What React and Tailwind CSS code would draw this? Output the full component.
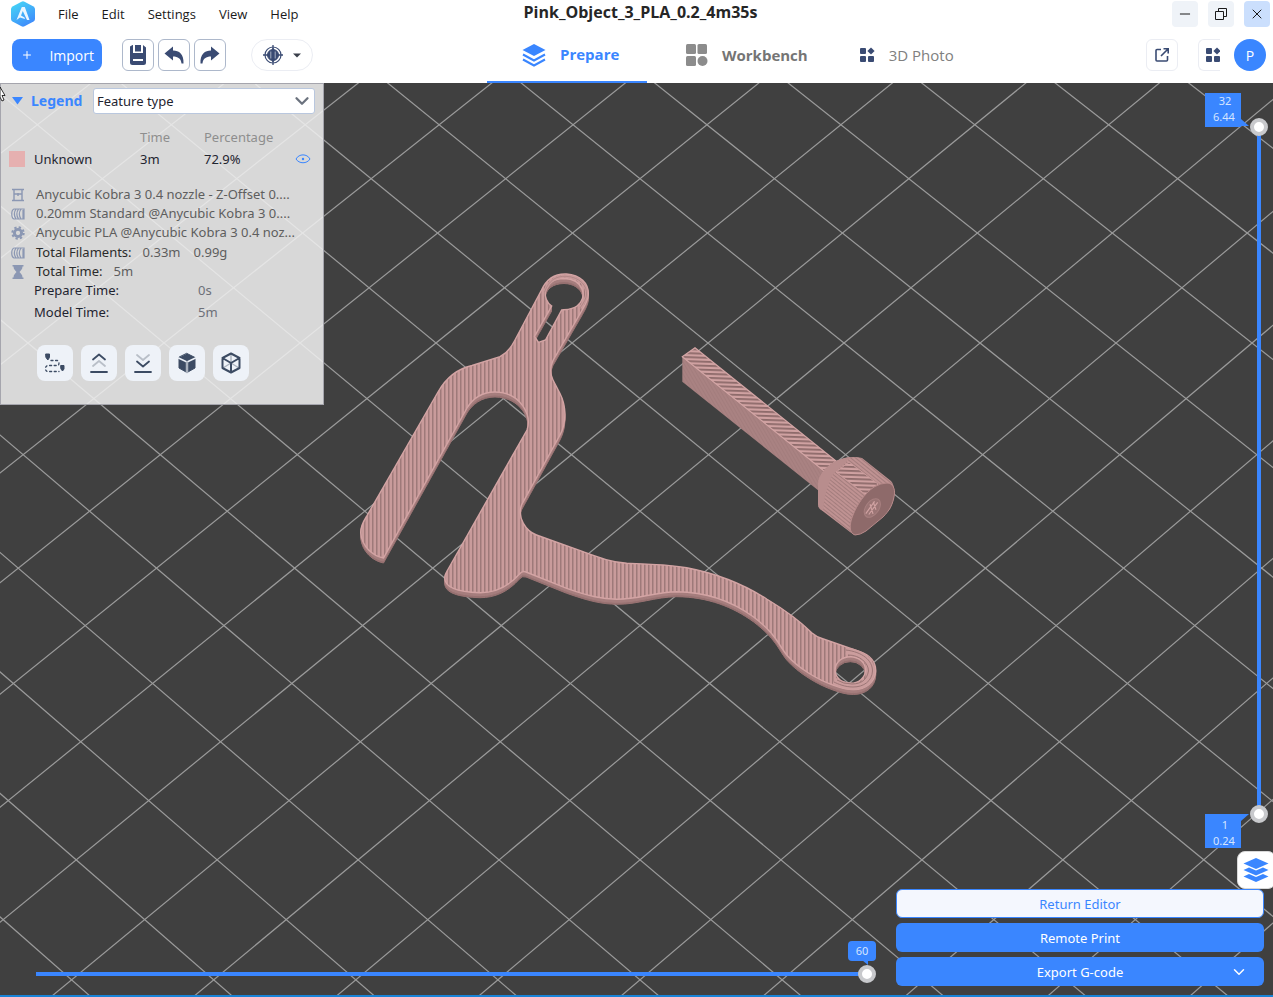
import React, { useState } from 'react';
import { ChevronDown, Minus, Plus, X } from 'lucide-react';

const menuItems = ['File', 'Edit', 'Settings', 'View', 'Help'];

const profileRows = [
  { icon: 'printer', text: 'Anycubic Kobra 3 0.4 nozzle - Z-Offset 0....' },
  { icon: 'filament', text: '0.20mm Standard @Anycubic Kobra 3 0....' },
  { icon: 'gear', text: 'Anycubic PLA @Anycubic Kobra 3 0.4 noz...' },
];

// Perspective projection of the build plate lattice
const project = (row, col) => {
  const size = 1 / (0.0072956 - 0.0000287 * row);
  return { x: 640 + (size * col) / 2, y: 454.8 + (size - 137.07) / 0.00958 };
};

const gridLines = [];
for (let c = -31; c <= 31; c += 2) {
  gridLines.push([project(-8, -8 + c), project(12, 12 + c)]);
  gridLines.push([project(-8, 8 + c), project(12, -12 + c)]);
}

const clipPath =
  'M383.5 558C373 556 362 547 360.7 533C360.5 527 363 522 366.5 516.5L438 392C446 378 456 369 472 365.5L500 356.7C507 353 512 346 515 340L541.5 290C547 278 556 273.5 566.5 274C580 275 589 283 588.3 295C588 300 585 305 582.5 309.5L553 360.5C550 367 550 374 553 380L560 393.5C566.5 406 566.5 423 560 435L521.5 505C517 518 526 531 536.5 535L583 551.7C600 558 610 562 626.7 563.3C645 564 665 564 686.7 567.7C714 573 742 583 766.7 599C790 613 802 623 812 633Q816 636.500 822 638.500L860 651.700C870 655 876 662 875.700 671C875 682 866 689.500 853.300 689.500C846 689.500 840 687.500 833 685C818 680 798 668 786.700 655C778 644 776 634 753.300 616.700C733 602 708 592 676.700 591.700C655 592 638 599.500 616.700 599.300C602 599 590 596.500 566.700 588.300L526 572Q522.500 570.500 519.500 574C508 587 495 592.700 480 592.700C458 592 444.700 588 444.700 578Q444.700 575 446.500 572L527 430C532 415 521 392.500 495 392C481 392 472 400 467 408Z' +
  'M551.7 306C542 300 541 279 564 278.500C584 279 588 298 577 306C573 309.500 567 309.500 561.700 310L545.500 340L538.500 342.500L534.500 336.500Z' +
  'M865.500 670A15.200 13.300 0 1 0 835.100 670A15.200 13.300 0 1 0 865.500 670Z';

const Scene = () => (
  <svg
    className="absolute inset-0 h-full w-full"
    viewBox="0 83 1273 912"
    preserveAspectRatio="xMidYMid slice"
    aria-hidden="true"
  >
    <defs>
      <pattern id="infill" width="4" height="8" patternUnits="userSpaceOnUse">
        <rect width="4" height="8" fill="#c99b9b" />
        <rect width="1.5" height="8" fill="#9e7979" />
      </pattern>
      <pattern id="barInfill" width="8" height="4" patternUnits="userSpaceOnUse" patternTransform="rotate(2)">
        <rect width="8" height="4" fill="#cfa1a1" />
        <rect width="8" height="1.800" fill="#8d6a6a" />
      </pattern>
      <pattern id="headLines" width="8" height="3" patternUnits="userSpaceOnUse" patternTransform="rotate(39)">
        <rect width="8" height="3" fill="#bf9292" />
        <rect width="8" height="1" fill="#a37d7d" />
      </pattern>
      <pattern id="wall" width="3" height="3" patternUnits="userSpaceOnUse" patternTransform="rotate(60)">
        <rect width="3" height="3" fill="#a98282" />
        <rect width="3" height="1" fill="#a37d7d" />
      </pattern>
      <path id="clip" d={clipPath} fillRule="evenodd" />
    </defs>

    <g stroke="#9b9b9b" strokeWidth="1.2">
      {gridLines.map(([a, b], i) => (
        <line key={i} x1={a.x} y1={a.y} x2={b.x} y2={b.y} />
      ))}
    </g>

    {/* Flat clip */}
    <g fill="#987272" stroke="#987272" strokeWidth="1">
      <use href="#clip" y="5" />
      <use href="#clip" y="4" />
    </g>
    <g fill="#a67e7e" stroke="#a67e7e" strokeWidth="1">
      <use href="#clip" y="3" />
      <use href="#clip" y="2" />
      <use href="#clip" y="1" />
    </g>
    <use href="#clip" fill="url(#infill)" stroke="#d3a4a4" strokeWidth="1.4" />
    <g fill="none">
      <path d="M544.500 292C549 280 556 276 566 276.300C580 277 587.500 286 586.500 295Q586 300 580 308" stroke="#c99b9b" strokeWidth="3" />
      <path d="M544.500 292C549 280 556 276 566 276.300C580 277 587.500 286 586.500 295Q586 300 580 308" stroke="#a98181" strokeWidth=".8" />
      <path d="M846 651C862 653 871 660 871 671C871 681 864 686.500 853 686.500C845 686.500 838 683 834 681" stroke="#cb9d9d" strokeWidth="7" />
      <path d="M846 650C862 652 872.500 660 872.500 671C872 681 864 687 853 687C845 687 838 684 834 682" stroke="#9c7676" strokeWidth="1" />
      <path d="M848 655C860 655 868.500 663 868.500 671C867 680 861 684 852 684Q843 684 837 680" stroke="#9c7676" strokeWidth="1" />
    </g>

    {/* Pin */}
    <path d="M682.300 356.700L825 470L824 495L682.300 381.700Z" fill="url(#wall)" />
    <path d="M682.300 356.700L695 347.700L836 461L824 471Z" fill="url(#barInfill)" stroke="#d3a5a5" strokeWidth="1.200" />
    <path
      d="M818 485C818 476 825 467 835 461.500C843 458 854 455.500 862 458L891 481C896 486 895 500 890 509L857 535Q853 535 850 532L820 509Q818 507 818 504Z"
      fill="url(#headLines)"
    />
    <path d="M818 485C818 476 825 467 835 461.500C840 459 847 457 851 457L835 472Q826 482 823 511L820 509Q818 507 818 504Z" fill="#b88d8d" />
    <path d="M836 472L849 462L878 484L866 495Z" fill="url(#barInfill)" stroke="#c99b9b" />
    <path
      d="M887 483C893 483 895 489 894.500 494C893 505 889 511 883 517L866 531Q860 535 855 535C849 533 849 525 853 515C857 505 864 494 874 487Q881 483 887 483Z"
      fill="#8e6a6a"
      stroke="#b68a8a"
      strokeWidth="1"
    />
    <g transform="rotate(-54 872.300 508)">
      <ellipse cx="872.300" cy="508" rx="10.500" ry="6.500" fill="#9b7575" stroke="#a88080" />
      <path d="M864 506h15M865 509h15M868 512l6-8M873 512l5-7" stroke="#d0a2a2" strokeWidth="1.200" />
    </g>
  </svg>
);

const Logo = () => (
  <svg width="24" height="26" viewBox="0 0 24 26" aria-hidden="true">
    <defs>
      <linearGradient id="logo" x1="0" y1="0" x2="0.600" y2="1">
        <stop offset="0" stopColor="#45dcf5" />
        <stop offset="1" stopColor="#3f8dfb" />
      </linearGradient>
    </defs>
    <path d="M10.500 .7Q12 0 13.500 .7L22.500 5.500Q24 6.500 24 8V18Q24 19.500 22.500 20.500L13.500 25.300Q12 26 10.500 25.300L1.500 20.500Q0 19.500 0 18V8Q0 6.500 1.500 5.500Z" fill="url(#logo)" />
    <path d="M10.800 6H13.800L18.500 19H16L11.800 10L10 14.500L13.500 16.500L14 18L9 16.500L5.500 19Z" fill="#e9f6ff" />
  </svg>
);

const LayersGlyph = ({ className }) => (
  <svg viewBox="0 0 24 24" className={className} aria-hidden="true">
    <path d="M12 1L23.500 7L12 13L.5 7Z" fill="currentColor" />
    <path d="M1 11.500L12 17.500L23 11.500M1 16.500L12 22.500L23 16.500" fill="none" stroke="currentColor" strokeWidth="2" />
  </svg>
);

const WorkbenchGlyph = () => (
  <svg width="22" height="22" viewBox="0 0 22 22" fill="#8c8c8c" aria-hidden="true">
    <rect x="0" y="0" width="10" height="10" rx="1.500" />
    <rect x="11.500" y="0" width="9.500" height="10" rx="1.500" />
    <rect x="0" y="12" width="10" height="10" rx="1.500" />
    <circle cx="16.500" cy="17" r="5" />
  </svg>
);

const AppsGlyph = () => (
  <svg width="16" height="16" viewBox="0 0 16 16" fill="#3a4b73" className="shrink-0" aria-hidden="true">
    <rect x="1" y="1" width="6" height="6" rx="1" />
    <rect x="1" y="9" width="6" height="6" rx="1" />
    <rect x="9" y="9" width="6" height="6" rx="1" />
    <path d="M12 .4L15.600 4L12 7.600L8.400 4Z" />
  </svg>
);

const SaveGlyph = () => (
  <svg width="18" height="22" viewBox="0 0 18 22" aria-hidden="true">
    <path d="M1 2.500L3.500 1H4V9H14V1L17 3.500V18.500Q17 21 14.500 21H3.500Q1 21 1 18.500Z" fill="#3a4b73" />
    <rect x="6" y="1" width="6" height="6.500" fill="#3a4b73" />
    <rect x="4" y="15" width="10" height="2" fill="#fff" />
  </svg>
);

const UndoGlyph = ({ className }) => (
  <svg width="20" height="18" viewBox="0 0 20 18" className={className} aria-hidden="true">
    <path d="M.5 7.500L9 .5V4.500C15 4.500 20 8 19.500 17.500H17.500C17 12.500 14 10.500 9 10.500V14.500Z" fill="#3a4b73" />
  </svg>
);

const TargetGlyph = () => (
  <svg width="20" height="20" viewBox="0 0 20 20" fill="none" stroke="#3a4b73" aria-hidden="true">
    <circle cx="10" cy="10" r="8" strokeWidth="1.200" />
    <circle cx="10" cy="10" r="5.500" fill="#3a4b73" />
    <path d="M10 0V20M0 10H20" strokeWidth="1.300" />
    <path d="M7.800 6.500V13.500M12.200 6.500V13.500" stroke="#c3cad8" strokeWidth=".8" />
    <path d="M10 3V17" strokeWidth="1.500" />
  </svg>
);

const PopoutGlyph = () => (
  <svg width="16" height="16" viewBox="0 0 16 16" fill="none" stroke="#3a4b73" strokeWidth="1.600" aria-hidden="true">
    <path d="M7 2.500H3Q2 2.500 2 3.500V13Q2 14 3 14H12.500Q13.500 14 13.500 13V9M7 9L13.500 2.500M9.500 1.800H14.200V6.500" />
  </svg>
);

const RestoreGlyph = () => (
  <svg width="14" height="14" viewBox="0 0 14 14" fill="none" stroke="#1a1a1a" aria-hidden="true">
    <path d="M1.500 4.500H9.500V12.500H1.500ZM4.500 4V1.500H12.500V9.500H10" />
  </svg>
);

const RowGlyph = ({ name }) => (
  <svg width="14" height="14" viewBox="0 0 14 14" className="shrink-0" aria-hidden="true">
    {name === 'printer' && (
      <path d="M1 1.500H13M3 2V12M11 2V12M1 12.500H13M3 6H11M7 5V8" fill="none" stroke="#8b97b3" strokeWidth="1.400" />
    )}
    {name === 'filament' && (
      <path d="M3 2C0 3 0 11 3 12M5 2C3 5 3 9 5 12M7.500 2C5.500 5 5.500 9 7.500 12M10 2C8 5 8 9 10 12M2.500 2H13V12H2.500M12 3V12" fill="none" stroke="#8b97b3" strokeWidth="1.200" />
    )}
    {name === 'gear' && (
      <g fill="none" stroke="#8b97b3">
        <circle cx="7" cy="7" r="3.600" strokeWidth="2.900" />
        <circle cx="7" cy="7" r="5.700" strokeWidth="2" strokeDasharray="2.300 2.177" />
      </g>
    )}
    {name === 'hourglass' && (
      <path d="M1.500 0H12.500V1.500H11.500C11.500 4.500 9.500 5.500 8.500 7C9.500 8.500 11.500 9.500 11.500 12.500H12.500V14H1.500V12.500H2.500C2.500 9.500 4.500 8.500 5.500 7C4.500 5.500 2.500 4.500 2.500 1.500H1.500Z" fill="#8b97b3" />
    )}
  </svg>
);

const EyeGlyph = () => (
  <svg width="16" height="12" viewBox="0 0 16 12" fill="none" stroke="#3a86ff" aria-hidden="true">
    <path d="M1 6C4 .5 12 .5 15 6C12 11 4 11 1 6Z" />
    <circle cx="8" cy="6" r="1.200" fill="#3a86ff" stroke="none" />
  </svg>
);

const ToolGlyph = ({ name }) => (
  <svg width="22" height="22" viewBox="0 0 22 22" fill="none" stroke="#3c4b63" strokeWidth="1.800" strokeLinecap="round" strokeLinejoin="round" aria-hidden="true">
    {name === 'Travel moves' && (
      <>
        <path d="M2 2H5.500V5.500L3.800 8L2 5.500ZM17 13.500H20V17L18.500 19L17 17Z" fill="#3c4b63" strokeWidth="1" />
        <path d="M7 8.500H13.500Q15 9.500 15 11Q15 13.500 13 13.500H4Q1.500 14 1.500 16.500Q1.500 19.500 4 19.500H15" strokeDasharray="2 2.600" strokeWidth="1.300" />
      </>
    )}
    {name === 'Layer up' && (
      <>
        <path d="M5 14L11 9L17 14" stroke="#b9bfc8" />
        <path d="M5 7.500L11 2.500L17 7.500M3 20H19" />
      </>
    )}
    {name === 'Layer down' && (
      <>
        <path d="M5 3L11 8L17 3" stroke="#b9bfc8" />
        <path d="M5 9.500L11 14.500L17 9.500M3 20H19" />
      </>
    )}
    {name === 'Solid view' && (
      <>
        <path d="M11 1.500L19 5.500V16L11 20.500L3 16V5.500Z" fill="#3c4b63" strokeWidth="1" />
        <path d="M2.500 6L11 10L19.500 6" stroke="#eef2f8" strokeWidth="1.400" />
        <path d="M11 10.500V20" stroke="#a9b1bd" strokeWidth="2.500" />
      </>
    )}
    {name === 'Wire view' && (
      <>
        <path d="M11 2V10M3 16L11 11L19 16" stroke="#a9b1bd" strokeWidth="1.400" />
        <path d="M11 1.500L19.500 6V16L11 20.500L2.500 16V6ZM2.500 6L11 11L19.500 6M11 11V20" strokeWidth="2" />
      </>
    )}
  </svg>
);

const toolNames = ['Travel moves', 'Layer up', 'Layer down', 'Solid view', 'Wire view'];

const TitleBar = () => (
  <div className="grid h-7 grid-cols-[1fr_auto_1fr] items-center">
    <div className="flex items-center pl-[11px]">
      <Logo />
      <nav className="ml-3 flex gap-px text-[13px]">
        {menuItems.map((item) => (
          <button key={item} className="px-[11px] leading-5">{item}</button>
        ))}
      </nav>
    </div>
    <h1 className="pl-2 pb-1 text-[16px] leading-5 font-bold text-[#262626]">Pink_Object_3_PLA_0.2_4m35s</h1>
    <div className="flex justify-end gap-[10px] pr-[3px]">
      <button aria-label="Minimize" className="flex h-[26px] w-[26px] items-center justify-center rounded bg-[#eff3f8]">
        <Minus size={16} strokeWidth={1.5} />
      </button>
      <button aria-label="Restore" className="flex h-[26px] w-[26px] items-center justify-center rounded bg-[#eff3f8]">
        <RestoreGlyph />
      </button>
      <button aria-label="Close" className="flex h-[26px] w-[26px] items-center justify-center rounded bg-[#cbdffd]">
        <X size={16} strokeWidth={1.5} />
      </button>
    </div>
  </div>
);

const Toolbar = () => (
  <div className="flex h-[55px] items-stretch">
    <div className="flex w-[487px] shrink-0 items-center pb-px pl-3">
      <button className="flex h-8 w-[90px] items-center justify-between rounded-lg bg-[#3a86ff] pr-2 pl-[9px] text-[14px] text-white">
        <Plus size={12} strokeWidth={2} />
        Import
      </button>
      <div className="ml-5 flex gap-1">
        <button aria-label="Save" className="flex h-8 w-8 items-center justify-center rounded-md border border-[#adb8cb]">
          <SaveGlyph />
        </button>
        <button aria-label="Undo" className="flex h-8 w-8 items-center justify-center rounded-md border border-[#adb8cb]">
          <UndoGlyph />
        </button>
        <button aria-label="Redo" className="flex h-8 w-8 items-center justify-center rounded-md border border-[#adb8cb]">
          <UndoGlyph className="-scale-x-100" />
        </button>
      </div>
      <button aria-label="Calibration" className="ml-[25px] flex h-8 w-[62px] items-center justify-between rounded-full border border-[#ebedf3] px-[11px]">
        <TargetGlyph />
        <svg width="8" height="5" viewBox="0 0 8 5" fill="#3a3f4a" aria-hidden="true">
          <path d="M0 .5H8L4 4.500Z" />
        </svg>
      </button>
    </div>

    <div className="flex flex-1 items-stretch text-[15px]">
      <button className="flex w-40 items-center gap-[14px] border-b-2 border-[#3a86ff] pl-[35px] font-bold text-[#3a86ff]">
        <LayersGlyph className="h-6 w-6" />
        Prepare
      </button>
      <button className="flex items-center gap-[14px] pb-px pl-[39px] font-bold text-[#757575]">
        <WorkbenchGlyph />
        Workbench
      </button>
      <button className="flex items-center gap-[14px] pb-px pl-[51px] text-[#808080]">
        <AppsGlyph />
        3D Photo
      </button>
    </div>

    <div className="flex items-center pr-[7px] pb-px">
      <button aria-label="Open in browser" className="flex h-8 w-8 items-center justify-center rounded-md border border-[#ebedf3]">
        <PopoutGlyph />
      </button>
      <button aria-label="Apps" className="ml-5 flex h-8 w-[22px] items-center overflow-hidden rounded-l-md border border-r-0 border-[#ebedf3] pl-[6px]">
        <AppsGlyph />
      </button>
      <button aria-label="Account" className="ml-[14px] h-8 w-8 rounded-full bg-[#3a86ff] text-[14px] text-white">P</button>
    </div>
  </div>
);

const LegendPanel = () => (
  <section className="absolute top-0 left-0 w-[324px] border border-[#a5a5ad] bg-[#f1f1f1]/86 pt-1 pb-[23px] text-[13px] leading-5 text-[#1f2430]">
    <div className="flex items-center pl-[11px]">
      <svg width="12" height="8" viewBox="0 0 12 8" aria-hidden="true">
        <path d="M0 0H11L5.500 7.500Z" fill="#3a86ff" />
      </svg>
      <label htmlFor="view-type" className="ml-[7px] w-[62px] text-[14px] font-bold text-[#3a86ff]">Legend</label>
      <div className="relative">
        <select
          id="view-type"
          className="h-[26px] w-[222px] appearance-none rounded-[3px] border border-[#b9c7de] bg-white pl-[3px] text-[13px]"
        >
          <option>Feature type</option>
        </select>
        <ChevronDown size={22} strokeWidth={2.5} className="pointer-events-none absolute top-[2px] right-[2px] text-[#6b727e]" />
      </div>
    </div>

    <table className="mt-[13px] w-full table-fixed text-left">
      <colgroup>
        <col className="w-[33px]" />
        <col className="w-[106px]" />
        <col className="w-[64px]" />
        <col className="w-[91px]" />
        <col />
      </colgroup>
      <thead>
        <tr className="text-[#8e8e8e]">
          <th />
          <th />
          <th className="font-normal">Time</th>
          <th className="font-normal">Percentage</th>
          <th />
        </tr>
      </thead>
      <tbody>
        <tr className="h-6">
          <td className="pl-2"><div className="h-4 w-4 bg-[#e6b0b0]" /></td>
          <td>Unknown</td>
          <td>3m</td>
          <td>72.9%</td>
          <td><button aria-label="Toggle visibility" className="block"><EyeGlyph /></button></td>
        </tr>
      </tbody>
    </table>

    <div className="mt-[14px] pl-[10px] leading-[19px] text-[#5e5e5e]">
      {profileRows.map((row) => (
        <div key={row.icon} className="flex items-center gap-[11px] whitespace-nowrap">
          <RowGlyph name={row.icon} />
          {row.text}
        </div>
      ))}
      <div className="mt-px flex items-center gap-[11px]">
        <RowGlyph name="filament" />
        <span className="text-[#2b2b2b]">Total Filaments:</span>
        <span>0.33m</span>
        <span className="pl-[2px]">0.99g</span>
      </div>
      <div className="flex items-center gap-[11px]">
        <RowGlyph name="hourglass" />
        <span className="text-[#2b2b2b]">Total Time:</span>
        <span>5m</span>
      </div>
    </div>
    <dl className="grid grid-cols-[164px_auto] gap-y-1 pl-[33px] leading-[18px]">
      <dt>Prepare Time:</dt>
      <dd className="text-[#6d7079]">0s</dd>
      <dt>Model Time:</dt>
      <dd className="text-[#6d7079]">5m</dd>
    </dl>

    <div className="mt-6 flex gap-2 pl-9">
      {toolNames.map((name) => (
        <button key={name} aria-label={name} className="flex h-9 w-9 items-center justify-center rounded-lg bg-[#eef2f8]">
          <ToolGlyph name={name} />
        </button>
      ))}
    </div>
  </section>
);

const thumbStyles =
  '[&::-webkit-slider-thumb]:pointer-events-auto [&::-webkit-slider-thumb]:h-[18px] [&::-webkit-slider-thumb]:w-[18px] [&::-webkit-slider-thumb]:appearance-none [&::-webkit-slider-thumb]:rounded-full [&::-webkit-slider-thumb]:border-4 [&::-webkit-slider-thumb]:border-[#c8c9cc] [&::-webkit-slider-thumb]:bg-white';

const LayerSlider = () => {
  const [top, setTop] = useState(32);
  const [bottom, setBottom] = useState(1);

  return (
    <div className="absolute top-[35px] right-[5px] bottom-[172px] w-[18px]">
      <div className="mx-auto h-full w-1 border-y-8 border-transparent bg-[#3a86ff] bg-clip-padding" />
      <input
        type="range"
        aria-label="Top layer"
        min="1"
        max="32"
        value={top}
        onChange={(e) => setTop(Number(e.target.value))}
        className={`pointer-events-none absolute inset-0 h-full w-[18px] appearance-none bg-transparent [direction:rtl] [writing-mode:vertical-lr] ${thumbStyles}`}
      />
      <input
        type="range"
        aria-label="Bottom layer"
        min="1"
        max="32"
        value={bottom}
        onChange={(e) => setBottom(Number(e.target.value))}
        className={`pointer-events-none absolute inset-0 h-full w-[18px] appearance-none bg-transparent [direction:rtl] [writing-mode:vertical-lr] ${thumbStyles}`}
      />
      <div className="absolute -top-[25px] right-[27px] h-[34px] w-9 bg-[#3a86ff] text-center text-[11px] leading-4 text-[#d5e5ff]">
        <div className="pl-1">{top}</div>
        <div className="pl-[2px]">6.44</div>
        <svg width="9" height="8" viewBox="0 0 9 8" className="absolute right-[-9px] bottom-0" aria-hidden="true">
          <path d="M0 0L8 7H0Z" fill="#3a86ff" />
        </svg>
      </div>
      <div className="absolute right-[27px] -bottom-[25px] h-[34px] w-9 bg-[#3a86ff] pt-[3px] text-center text-[11px] leading-4 text-[#d5e5ff]">
        <div className="pl-1">{bottom}</div>
        <div className="pl-[2px]">0.24</div>
        <svg width="9" height="8" viewBox="0 0 9 8" className="absolute top-0 right-[-9px]" aria-hidden="true">
          <path d="M0 0H8L0 7Z" fill="#3a86ff" />
        </svg>
      </div>
    </div>
  );
};

const MoveSlider = () => {
  const [move, setMove] = useState(60);

  return (
    <div className="absolute right-[397px] bottom-3 left-9 h-[18px]">
      <div className="mr-2 h-full border-y-7 border-transparent bg-[#3a86ff] bg-clip-padding" />
      <input
        type="range"
        aria-label="Move"
        min="0"
        max="60"
        value={move}
        onChange={(e) => setMove(Number(e.target.value))}
        className={`absolute inset-0 h-[18px] w-full appearance-none bg-transparent ${thumbStyles}`}
      />
      <div className="absolute right-0 bottom-[22px] h-5 w-7 rounded-sm bg-[#3a86ff] text-center text-[11px] leading-5 text-[#d5e5ff]">
        {move}
        <svg width="6" height="5" viewBox="0 0 6 5" className="absolute right-2 bottom-[-4px]" aria-hidden="true">
          <path d="M0 0H6V5Z" fill="#3a86ff" />
        </svg>
      </div>
    </div>
  );
};

const ActionButtons = () => (
  <div className="absolute right-[9px] bottom-[9px] flex w-[368px] flex-col gap-[5px] text-[13px] leading-5">
    <button className="h-[29px] rounded-md border border-[#3a86ff] bg-[#f4f7fe] text-[#3a86ff]">Return Editor</button>
    <button className="h-[29px] rounded-md bg-[#3a86ff] text-white">Remote Print</button>
    <button className="relative h-[29px] rounded-md bg-[#3a86ff] text-white">
      Export G-code
      <ChevronDown size={18} className="absolute top-[6px] right-4" />
    </button>
  </div>
);

const App = () => (
  <div className="flex h-screen flex-col bg-white font-['Noto_Sans','Open_Sans',sans-serif] text-[#1a1a1a]">
    <header className="shrink-0 font-['Open_Sans','Noto_Sans',sans-serif]">
      <TitleBar />
      <Toolbar />
    </header>
    <main className="relative flex-1 overflow-hidden border-b-2 border-[#1883d7] bg-[#404040]">
      <Scene />
      <LegendPanel />
      <LayerSlider />
      <MoveSlider />
      <button
        aria-label="Layers"
        className="absolute right-[-3px] bottom-[106px] flex h-[38px] w-[39px] items-center rounded-lg border border-[#d8d8d8] bg-white pl-[5px] text-[#3a86ff]"
      >
        <svg width="26" height="26" viewBox="0 0 26 26" fill="currentColor" aria-hidden="true">
          <path d="M13 1L25.500 6.500L13 12L.5 6.500Z" />
          <path d="M.5 13L6 10.500L13 13.500L20 10.500L25.500 13L13 18.500Z" />
          <path d="M.5 19.500L6 17L13 20L20 17L25.500 19.500L13 25Z" />
        </svg>
      </button>
      <ActionButtons />
      <svg width="6" height="18" viewBox="0 0 6 18" className="absolute top-[2px] left-0" aria-hidden="true">
        <path d="M0 2L5 10.500H2L4 15L2 16L0 12Z" fill="#fff" stroke="#000" strokeWidth=".8" />
      </svg>
    </main>
  </div>
);

export default App;
